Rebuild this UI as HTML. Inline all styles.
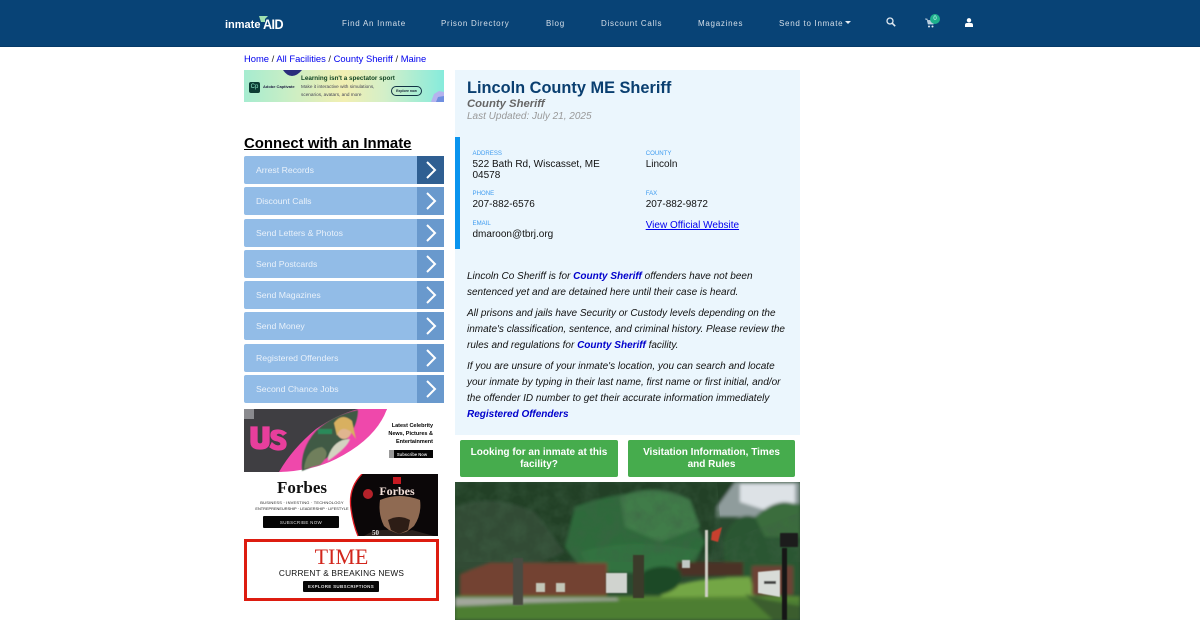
<!DOCTYPE html>
<html><head><meta charset="utf-8"><title>Lincoln County ME Sheriff</title>
<style>
*{box-sizing:border-box}
html,body{margin:0;padding:0;width:1200px;height:620px;overflow:hidden;background:#fff;font-family:"Liberation Sans",sans-serif}
.a{position:absolute;white-space:nowrap}
#nav{position:absolute;left:0;top:0;width:1200px;height:47px;background:#084376;border-bottom:1px solid #063a68}
.n{position:absolute;top:18px;font-size:8px;line-height:11px;letter-spacing:.72px;color:#d5dfe9;white-space:nowrap}
a{color:#0000ee}
.btn{position:absolute;left:244px;width:200px;height:28px;background:#92bce7;border-radius:2px 0 0 2px;color:#e9f1fa;font-size:8.700px;line-height:28px;padding-left:12px;padding-top:0}
.btn span{position:relative;top:0}
.btn i{position:absolute;right:0;top:0;width:27.500px;height:28px;background:#6999cd}
.btn svg{position:absolute;right:0;top:0}
.lab{position:absolute;font-size:6.100px;line-height:8px;color:#3f9cf0;white-space:nowrap}
.val{position:absolute;font-size:10px;line-height:11px;color:#111;white-space:nowrap}
.p{position:absolute;left:467px;font-size:10px;line-height:16px;font-style:italic;color:#111;white-space:nowrap}
.p b{color:#0000cc}
.g{position:absolute;top:440px;height:37px;background:#46ac4d;border-radius:2px;color:#fff;font-weight:bold;font-size:10px;line-height:11.500px;text-align:center;padding-top:7px}
</style></head><body>
<div id="nav">
<div class="a" style="left:225px;top:18px;font-size:11px;line-height:14px;font-weight:bold;color:#fff">inmate</div>
<div class="a" style="left:263px;top:16px;font-size:14px;line-height:16px;font-weight:bold;color:#fff;letter-spacing:-.6px;transform:scaleX(.9);transform-origin:0 0">AID</div>
<svg class="a" style="left:258px;top:15px" width="11" height="8"><path d="M1 1h9L7 4v3H3z" fill="#9fe0b0"/></svg>
<div class="n" style="left:342px">Find An Inmate</div>
<div class="n" style="left:441px">Prison Directory</div>
<div class="n" style="left:546px">Blog</div>
<div class="n" style="left:601px">Discount Calls</div>
<div class="n" style="left:698px">Magazines</div>
<div class="n" style="left:779px">Send to Inmate</div>
<svg class="a" style="left:845px;top:21px" width="6" height="4"><path d="M0 0h6L3 3z" fill="#e4ebf2"/></svg>
<svg class="a" style="left:886px;top:17px" width="10" height="10" fill="none" stroke="#dfe8f0" stroke-width="1.300"><circle cx="4" cy="4" r="3"/><path d="M6.200 6.200 9.200 9.200" stroke-width="1.600"/></svg>
<svg class="a" style="left:925px;top:18px" width="10" height="10"><path d="M0 1h2l1.200 5h5L9.500 2.500H3" fill="#b8cfe0" stroke="#c8d8e6" stroke-width=".8"/><circle cx="4" cy="8.500" r="1" fill="#dfe8f0"/><circle cx="7.500" cy="8.500" r="1" fill="#dfe8f0"/></svg>
<div class="a" style="left:930px;top:14px;width:10px;height:10px;border-radius:50%;background:#1eb18c;color:#dff;font-size:6px;line-height:10px;text-align:center">0</div>
<svg class="a" style="left:965px;top:18px" width="8" height="9"><circle cx="4" cy="2.300" r="2.200" fill="#fff"/><path d="M0 9V7.200Q0 5 2 5h4q2 0 2 2.200V9z" fill="#fff"/></svg>
</div>

<div class="a" style="left:244px;top:52px;font-size:9.400px;line-height:13px;color:#222"><a style="text-decoration:none">Home</a> / <a style="text-decoration:none">All Facilities</a> / <a style="text-decoration:none">County Sheriff</a> / <a style="text-decoration:none">Maine</a></div>

<!-- Adobe ad -->
<div class="a" style="left:244px;top:70px;width:200px;height:32px;background:linear-gradient(90deg,#a6ecd0 0%,#cdeec3 25%,#f2efb2 50%,#d4efc8 70%,#86ebdc 100%);overflow:hidden">
<svg class="a" style="left:39px;top:0" width="20" height="6"><path d="M0 0h19Q14 6 9 6 4 6 0 0z" fill="#2b2c7c"/></svg>
<div class="a" style="left:5px;top:12px;width:11px;height:11px;background:#0c3c34;border-radius:2px;color:#8fe8c8;font-size:6px;line-height:11px;text-align:center">Cp</div>
<div class="a" style="left:19px;top:14px;font-size:4px;line-height:6px;font-weight:bold;color:#224">Adobe Captivate</div>
<div class="a" style="left:57px;top:5px;font-size:6.300px;line-height:8px;font-weight:bold;color:#142">Learning isn't a spectator sport</div>
<div class="a" style="left:57px;top:13px;font-size:4.700px;line-height:7.500px;color:#445">Make it interactive with simulations,<br>scenarios, avatars, and more</div>
<div class="a" style="left:147px;top:16px;width:31px;height:10px;border:1px solid #134;border-radius:5px;font-size:3.500px;line-height:8px;text-align:center;font-weight:bold;color:#123">Explore now</div>
<svg class="a" style="left:186px;top:18px" width="14" height="14"><path d="M1 14 4 6l5-3 5 1v10z" fill="#b5b3ee"/><path d="M6 14l2-5 6-1v6z" fill="#6f8fe0"/></svg>
</div>

<div class="a" style="left:244px;top:134px;font-size:14.930px;line-height:20px;font-weight:bold;color:#000;text-decoration:underline">Connect with an Inmate</div>

<div class="btn" style="top:156px"><span>Arrest Records</span><i style="background:#2f5f92"></i><svg width="27" height="28" fill="none" stroke="#fff" stroke-width="2"><path d="M10 6l8 8-8 8"/></svg></div>
<div class="btn" style="top:187.300px"><span>Discount Calls</span><i></i><svg width="27" height="28" fill="none" stroke="#fff" stroke-width="2"><path d="M10 6l8 8-8 8"/></svg></div>
<div class="btn" style="top:218.500px"><span>Send Letters &amp; Photos</span><i></i><svg width="27" height="28" fill="none" stroke="#fff" stroke-width="2"><path d="M10 6l8 8-8 8"/></svg></div>
<div class="btn" style="top:249.800px"><span>Send Postcards</span><i></i><svg width="27" height="28" fill="none" stroke="#fff" stroke-width="2"><path d="M10 6l8 8-8 8"/></svg></div>
<div class="btn" style="top:281px"><span>Send Magazines</span><i></i><svg width="27" height="28" fill="none" stroke="#fff" stroke-width="2"><path d="M10 6l8 8-8 8"/></svg></div>
<div class="btn" style="top:312.300px"><span>Send Money</span><i></i><svg width="27" height="28" fill="none" stroke="#fff" stroke-width="2"><path d="M10 6l8 8-8 8"/></svg></div>
<div class="btn" style="top:343.500px"><span>Registered Offenders</span><i></i><svg width="27" height="28" fill="none" stroke="#fff" stroke-width="2"><path d="M10 6l8 8-8 8"/></svg></div>
<div class="btn" style="top:374.800px"><span>Second Chance Jobs</span><i></i><svg width="27" height="28" fill="none" stroke="#fff" stroke-width="2"><path d="M10 6l8 8-8 8"/></svg></div>

<!-- Us ad -->
<svg class="a" style="left:244px;top:409px" width="195" height="63">
<defs><filter id="s"><feGaussianBlur stdDeviation=".6"/></filter></defs>
<rect width="195" height="63" fill="#fff"/>
<path d="M0 0H143Q130 25 92 44 62 60 35 63H0z" fill="#3f3e42"/>
<path d="M143 0Q132 30 92 50 68 62 35 63 48 40 72 20 92 6 114 0z" fill="#ef48ab"/>
<g filter="url(#s)">
<path d="M114 0Q114 26 84 48 72 57 58 62 56 40 72 22 88 6 114 1z" fill="#3f5a44"/>
<path d="M60 60Q62 40 78 38 88 44 76 56z" fill="#6f7f5c"/>
<path d="M84 48Q90 30 106 30 104 38 84 52z" fill="#d3d3c0"/>
<ellipse cx="100" cy="20" rx="8" ry="10" fill="#e0b58f"/>
<path d="M90 14Q98 3 108 12L112 30 106 22Q96 16 93 27z" fill="#d8b060"/>
<rect x="74" y="20" width="14" height="5" fill="#2a8a5a"/>
</g>
<rect width="10" height="10" fill="#8a8a8e"/>
<g fill="#e83e9c" stroke="#e83e9c" stroke-width="1.300">
<path d="M7 18v15q0 7 9 7t9-7V18h-6v14q0 3-3 3t-3-3V18z"/>
<path d="M42 24q-4-3-8-3-7 0-7 5 0 5 7 6 3 1 3 3t-3 2q-3 0-6-3l-2 4q4 3 8 3 8 0 8-6 0-5-7-7-3-1-3-2t2-2q3 0 5 2z"/>
</g>
<rect x="149" y="41" width="40" height="8" fill="#050505"/><rect x="145" y="41" width="5" height="8" fill="#999"/>
<text x="189" y="18" font-size="5.500" font-weight="bold" text-anchor="end" font-family="Liberation Sans">Latest Celebrity</text>
<text x="189" y="26" font-size="5.500" font-weight="bold" text-anchor="end" font-family="Liberation Sans">News, Pictures &amp;</text>
<text x="189" y="34" font-size="5.500" font-weight="bold" text-anchor="end" font-family="Liberation Sans">Entertainment</text>
<text x="168" y="47" font-size="4.200" font-weight="bold" fill="#ddd" text-anchor="middle" font-family="Liberation Sans">Subscribe Now</text>
</svg>

<!-- Forbes ad -->
<svg class="a" style="left:244px;top:474px" width="195" height="63">
<rect width="195" height="63" fill="#fff"/>
<text x="58" y="19" font-size="17" font-weight="bold" text-anchor="middle" font-family="Liberation Serif" fill="#111">Forbes</text>
<text x="58" y="30" font-size="4" text-anchor="middle" font-family="Liberation Sans" fill="#222" letter-spacing=".2">BUSINESS · INVESTING · TECHNOLOGY</text>
<text x="58" y="36" font-size="3.900" text-anchor="middle" font-family="Liberation Sans" fill="#222">ENTREPRENEURSHIP · LEADERSHIP · LIFESTYLE</text>
<rect x="19" y="42" width="76" height="12" rx="1" fill="#050505"/>
<text x="57" y="50" font-size="4.500" text-anchor="middle" fill="#ddd" font-family="Liberation Sans" letter-spacing=".3">SUBSCRIBE NOW</text>
<path d="M194 0H118Q104 14 107 35Q109 50 114 62H194z" fill="#0b0708"/>
<path d="M118 0Q104 14 107 35Q109 50 114 62" fill="none" stroke="#e01c24" stroke-width="1.300"/>
<path d="M136 26Q155 18 176 26 178 40 170 52L160 60H150L140 52Q134 40 136 26z" fill="#8f6a52"/>
<path d="M144 46Q155 40 166 46L164 56 155 60 147 56z" fill="#2d1d16"/>
<path d="M120 62Q130 55 145 56L155 60 168 56 190 62z" fill="#2b211d"/>
<circle cx="124" cy="20" r="5" fill="#b5222a"/>
<text x="153" y="21" font-size="12" font-weight="bold" text-anchor="middle" font-family="Liberation Serif" fill="#f2dfd8">Forbes</text>
<rect x="149" y="3" width="8" height="7" fill="#c61a22"/>
<text x="128" y="61" font-size="7" font-weight="bold" fill="#ddd" font-family="Liberation Serif">50</text>
</svg>

<!-- Time ad -->
<div class="a" style="left:244px;top:539px;width:195px;height:62px;border:3px solid #dd1c10;background:#fff">
<div class="a" style="left:0;width:189px;top:3px;text-align:center;font-family:'Liberation Serif',serif;font-size:22px;line-height:24px;color:#d2261c">TIME</div>
<div class="a" style="left:0;width:189px;top:26px;text-align:center;font-size:8.300px;line-height:11px;color:#111;letter-spacing:.2px">CURRENT &amp; BREAKING NEWS</div>
<div class="a" style="left:56px;top:39px;width:76px;height:11px;background:#060606;border-radius:1px;color:#ddd;font-size:4.500px;line-height:11px;text-align:center;letter-spacing:.3px;font-weight:bold">EXPLORE SUBSCRIPTIONS</div>
</div>

<!-- Main panel -->
<div class="a" style="left:455px;top:70px;width:345px;height:365px;background:#ebf6fd"></div>
<div class="a" style="left:467px;top:78px;font-size:16.350px;line-height:20px;font-weight:bold;color:#0a3f70">Lincoln County ME Sheriff</div>
<div class="a" style="left:467px;top:97px;font-size:11.300px;line-height:14px;font-weight:bold;font-style:italic;color:#666">County Sheriff</div>
<div class="a" style="left:467px;top:110px;font-size:10px;line-height:13px;font-style:italic;color:#999">Last Updated: July 21, 2025</div>
<div class="a" style="left:455px;top:137px;width:5px;height:112px;background:#0a94ee"></div>

<div class="lab" style="left:472.500px;top:150px">ADDRESS</div>
<div class="val" style="left:472.500px;top:159px">522 Bath Rd, Wiscasset, ME<br>04578</div>
<div class="lab" style="left:645.700px;top:150px">COUNTY</div>
<div class="val" style="left:645.700px;top:159px">Lincoln</div>
<div class="lab" style="left:472.500px;top:190px">PHONE</div>
<div class="val" style="left:472.500px;top:199px">207-882-6576</div>
<div class="lab" style="left:645.700px;top:190px">FAX</div>
<div class="val" style="left:645.700px;top:199px">207-882-9872</div>
<div class="lab" style="left:472.500px;top:220px">EMAIL</div>
<div class="val" style="left:472.500px;top:229px">dmaroon@tbrj.org</div>
<div class="val" style="left:645.700px;top:220px"><a style="text-decoration:underline">View Official Website</a></div>

<div class="p" style="top:269px">Lincoln Co Sheriff is for <b>County Sheriff</b> offenders have not been<br>sentenced yet and are detained here until their case is heard.</div>
<div class="p" style="top:306px">All prisons and jails have Security or Custody levels depending on the<br>inmate's classification, sentence, and criminal history. Please review the<br>rules and regulations for <b>County Sheriff</b> facility.</div>
<div class="p" style="top:359px">If you are unsure of your inmate's location, you can search and locate<br>your inmate by typing in their last name, first name or first initial, and/or<br>the offender ID number to get their accurate information immediately<br><b>Registered Offenders</b></div>

<div class="g" style="left:460px;width:158px">Looking for an inmate at this<br>facility?</div>
<div class="g" style="left:628px;width:167px">Visitation Information, Times<br>and Rules</div>

<!-- Photo -->
<svg class="a" style="left:455px;top:482px" width="345" height="138" viewBox="0 0 345 138">
<defs>
<filter id="b" x="-5%" y="-5%" width="110%" height="110%"><feGaussianBlur stdDeviation="1.500"/></filter>
<filter id="c"><feGaussianBlur stdDeviation=".5"/></filter>
<filter id="t" x="0" y="0" width="100%" height="100%"><feTurbulence type="fractalNoise" baseFrequency=".07" numOctaves="3" seed="4"/><feColorMatrix values="0 0 0 0 .05 0 0 0 0 .12 0 0 0 0 .06 1.800 0 0 0 -.6"/></filter>
<clipPath id="tc"><path d="M0 0H262L265 35 268 60 345 30V80H222V80H152L5 80 0 80z"/></clipPath>
</defs>
<rect width="345" height="138" fill="#2a4a30"/>
<g filter="url(#b)">
<path d="M262 0H345V35H262z" fill="#8f9c9c"/>
<path d="M285 2H340V22L310 28 285 20z" fill="#dde2e6"/>
<path d="M0 13H15V43H0z" fill="#77897e"/>
<path d="M0 0H280L262 25 255 80H0z" fill="#223f28"/>
<path d="M0 25Q35 10 80 30L110 70 70 88H0z" fill="#324c36"/>
<path d="M120 25Q170 5 225 15L250 60 235 90 130 90 110 65z" fill="#2f6a3b"/>
<path d="M165 15Q200 0 235 18L245 45 205 60 170 45z" fill="#417c49"/>
<path d="M125 70Q175 55 245 68L225 92 135 90z" fill="#327240"/>
<path d="M268 60Q278 28 300 35 325 12 345 25V112H272z" fill="#2b5630"/>
<path d="M300 35Q320 18 345 22V55H310z" fill="#3a6d3e"/>
<path d="M5 92 35 81H152V116H5z" fill="#734232"/>
<path d="M222 80H288V94H222z" fill="#4c3027"/>
<path d="M0 114H345V138H0z" fill="#578735"/>
<path d="M205 115Q215 96 295 95L300 114z" fill="#73a644"/>
<path d="M0 116H162L165 120 60 122 0 124z" fill="#a3a79c"/>
<path d="M0 125Q120 116 345 118V138H0z" fill="#4d7e30"/>
<path d="M188 90Q205 80 225 88 232 106 205 113L188 112z" fill="#1f4a28"/>
<path d="M297 84H338V113H297z" fill="#6d4236"/>
<path d="M290 112Q310 118 345 124V138H318z" fill="#3a5d2f"/>
</g>
<g clip-path="url(#tc)"><rect width="345" height="80" filter="url(#t)" opacity=".5"/></g>
<g filter="url(#c)">
<rect x="58" y="76" width="10" height="47" fill="#4a4c42"/>
<rect x="178" y="73" width="11" height="43" fill="#3a3a2c"/>
<rect x="151" y="91" width="21" height="20" fill="#d0d3cf"/>
<rect x="81" y="101" width="9" height="9" fill="#c2c6b8"/>
<rect x="101" y="101" width="9" height="9" fill="#c2c6b8"/>
<rect x="227" y="78" width="8" height="8" fill="#c0c8c4"/>
<rect x="250" y="48" width="3" height="67" fill="#cfcfc6"/>
<path d="M257 50 267 45 263 60 256 58z" fill="#c8402f"/>
<path d="M303 90 325 88V115L303 111z" fill="#d8dcd8"/>
<rect x="309" y="99" width="12" height="3" fill="#444"/>
<rect x="327" y="66" width="5" height="72" fill="#151515"/>
<rect x="325" y="51" width="18" height="14" rx="1" fill="#1c1c1c"/>
</g>
</svg>
</body></html>
